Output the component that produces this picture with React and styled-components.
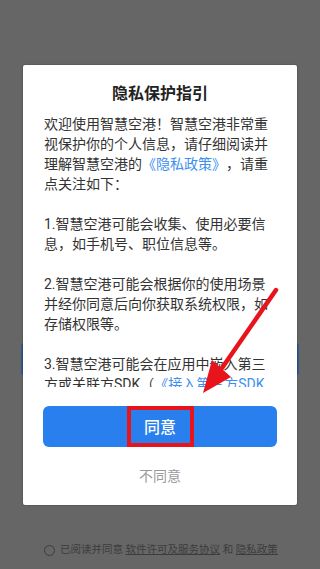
import React from 'react';
import styled, { createGlobalStyle } from 'styled-components';

const GlobalStyle = createGlobalStyle`
  html, body {
    margin: 0;
    padding: 0;
    background: #666666;
  }
  body {
    font-family: Roboto, "Noto Sans CJK SC", "Noto Sans", sans-serif;
    text-spacing-trim: space-all;
  }
`;

const Page = styled.div`
  position: relative;
  width: 320px;
  height: 569px;
  overflow: hidden;
  background: #666666;
  display: flex;
  flex-direction: column;
`;

const BehindButton = styled.div`
  margin: 343px 21px 0;
  height: 32px;
  border-radius: 3px;
  background: #34578a;
`;

const Agreement = styled.div`
  margin-top: auto;
  padding: 0 0 12px 44px;
  display: flex;
  align-items: center;
  gap: 5px;
  font-size: 10.5px;
  line-height: 14px;
  color: #3c3c3c;
`;

const Radio = styled.span`
  width: 9px;
  height: 9px;
  border: 1px solid #3c3c3c;
  border-radius: 50%;
`;

const Underlined = styled.span`
  text-decoration: underline;
`;

const Overlay = styled.div`
  position: absolute;
  inset: 0;
  display: flex;
  align-items: center;
  justify-content: center;
`;

const Dialog = styled.div`
  width: 274px;
  height: 440px;
  box-sizing: border-box;
  padding: 18px 20px 19px;
  background: #ffffff;
  border-radius: 2px;
  box-shadow: 0 0 1px 1px rgba(0, 0, 0, 0.12);
  display: flex;
  flex-direction: column;
`;

const Title = styled.div`
  font-size: 16px;
  line-height: 22px;
  font-weight: 700;
  color: #222222;
  text-align: center;
`;

const Body = styled.div`
  margin: 9px 1px 0;
  height: 273px;
  overflow: hidden;
  font-size: 14px;
  line-height: 20px;
  color: #333333;
  text-spacing-trim: space-all;

  p {
    margin: 0 0 20px;
  }
`;

const Link = styled.span`
  color: #3d8ef0;
`;

const AgreeButton = styled.button`
  margin-top: 19px;
  height: 41px;
  border: none;
  border-radius: 6px;
  background: #2a7fef;
  display: flex;
  align-items: center;
  justify-content: center;
  padding: 0;
  font-family: inherit;
`;

const Highlight = styled.span`
  box-sizing: border-box;
  width: 67px;
  height: 41px;
  border: 4px solid #e8141c;
  display: flex;
  align-items: center;
  justify-content: center;
  font-size: 16px;
  font-weight: 500;
  color: #ffffff;
`;

const Decline = styled.div`
  margin-top: 19px;
  font-size: 14px;
  line-height: 20px;
  color: #9a9a9a;
  text-align: center;
`;

const Arrow = styled.svg`
  position: absolute;
  left: 0;
  top: 0;
  pointer-events: none;
`;

export default function App() {
  return (
    <>
      <GlobalStyle />
      <Page>
        <BehindButton />
        <Agreement>
          <Radio />
          <span>
            已阅读并同意 <Underlined>软件许可及服务协议</Underlined> 和 <Underlined>隐私政策</Underlined>
          </span>
        </Agreement>

        <Overlay>
          <Dialog>
            <Title>隐私保护指引</Title>
            <Body>
              <p>
                欢迎使用智慧空港！智慧空港非常重视保护你的个人信息，请仔细阅读并理解智慧空港的<Link>《隐私政策》</Link>，请重点关注如下：
              </p>
              <p>1.智慧空港可能会收集、使用必要信息，如手机号、职位信息等。</p>
              <p>2.智慧空港可能会根据你的使用场景并经你同意后向你获取系统权限，如存储权限等。</p>
              <p>
                3.智慧空港可能会在应用中嵌入第三方或关联方SDK（<Link>《接入第三方SDK目录》</Link>）。
              </p>
            </Body>
            <AgreeButton>
              <Highlight>同意</Highlight>
            </AgreeButton>
            <Decline>不同意</Decline>
          </Dialog>
        </Overlay>

        <Arrow width="320" height="569" viewBox="0 0 320 569">
          <line x1="276" y1="290" x2="222" y2="368" stroke="#e8141c" strokeWidth="4.5" strokeLinecap="round" />
          <polygon points="212,360 231,377 203,393" fill="#e8141c" />
        </Arrow>
      </Page>
    </>
  );
}
